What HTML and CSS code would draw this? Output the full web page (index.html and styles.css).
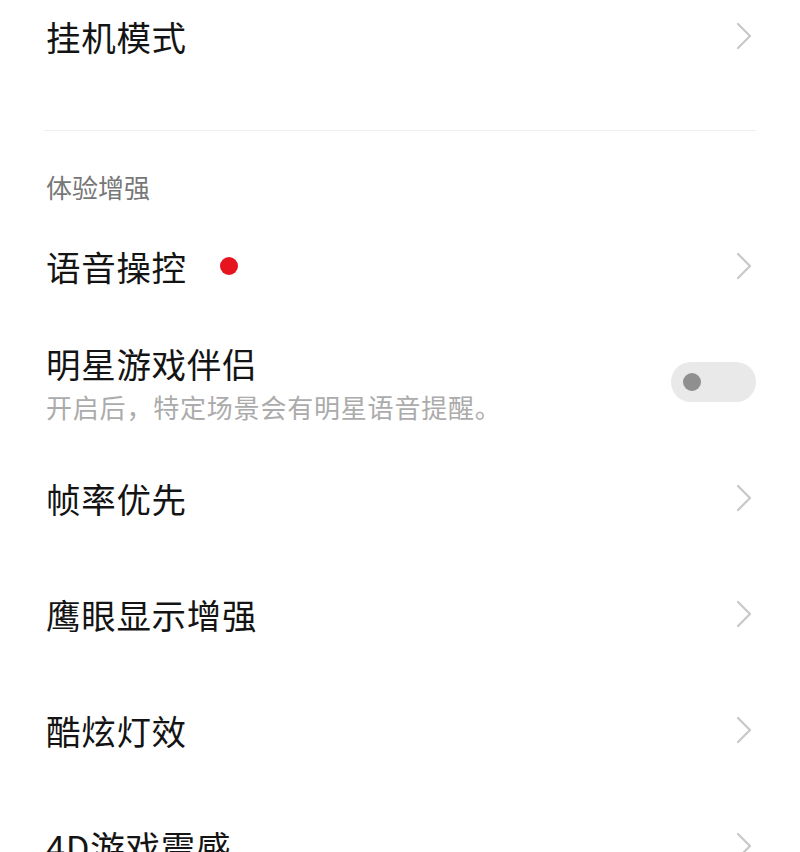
FILE: index.html
```html
<!DOCTYPE html>
<html lang="zh-CN">
<head>
<meta charset="utf-8">
<title>设置</title>
<link rel="stylesheet" href="styles.css">
</head>
<body>
<div class="page">
  <div class="row first">
    <span class="title">挂机模式</span>
    <svg class="chev" viewBox="0 0 16 28"><path d="M2 2 L14 14 L2 26"/></svg>
  </div>
  <div class="divider"></div>
  <div class="section">体验增强</div>
  <div class="row">
    <div class="left"><span class="title">语音操控</span><span class="dot"></span></div>
    <svg class="chev" viewBox="0 0 16 28"><path d="M2 2 L14 14 L2 26"/></svg>
  </div>
  <div class="row">
    <div class="stack">
      <span class="title">明星游戏伴侣</span>
      <span class="sub">开启后，特定场景会有明星语音提醒。</span>
    </div>
    <div class="toggle"><span class="knob"></span></div>
  </div>
  <div class="row">
    <span class="title">帧率优先</span>
    <svg class="chev" viewBox="0 0 16 28"><path d="M2 2 L14 14 L2 26"/></svg>
  </div>
  <div class="row">
    <span class="title">鹰眼显示增强</span>
    <svg class="chev" viewBox="0 0 16 28"><path d="M2 2 L14 14 L2 26"/></svg>
  </div>
  <div class="row">
    <span class="title">酷炫灯效</span>
    <svg class="chev" viewBox="0 0 16 28"><path d="M2 2 L14 14 L2 26"/></svg>
  </div>
  <div class="row">
    <span class="title">4D游戏震感</span>
    <svg class="chev" viewBox="0 0 16 28"><path d="M2 2 L14 14 L2 26"/></svg>
  </div>
</div>
</body>
</html>
```
FILE: styles.css
```css
html, body {
  margin: 0;
  padding: 0;
  background: #ffffff;
}
body {
  font-family: "Noto Sans CJK SC", "Noto Sans", sans-serif;
  color: #141414;
  overflow: hidden;
  height: 852px;
}
.page {
  padding: 0 44px 0 46px;
}
.row {
  height: 116px;
  display: flex;
  align-items: center;
  justify-content: space-between;
}
.row.first {
  height: 74px;
  padding-bottom: 2px;
  box-sizing: border-box;
}
.title {
  font-size: 34.5px;
  line-height: 40px;
  letter-spacing: 0.7px;
}
.left {
  display: flex;
  align-items: center;
}
.dot {
  width: 18px;
  height: 18px;
  border-radius: 50%;
  background: #e5141f;
  margin-left: 33px;
}
.chev {
  width: 16px;
  height: 28px;
  margin-right: 4px;
  fill: none;
  stroke: #c8c8c8;
  stroke-width: 2.2;
  stroke-linecap: round;
  stroke-linejoin: round;
}
.divider {
  margin-top: 56px;
  margin-left: -2px;
  height: 1px;
  background: #eeeeee;
}
.section {
  padding: 43px 0 8px;
  font-size: 26px;
  line-height: 26px;
  color: #777777;
}
.stack {
  display: flex;
  flex-direction: column;
}
.sub {
  margin-top: 9px;
  font-size: 26px;
  line-height: 30px;
  letter-spacing: 0.8px;
  color: #ababab;
}
.toggle {
  width: 85px;
  height: 40px;
  border-radius: 20px;
  background: #e9e9e9;
  display: flex;
  align-items: center;
  padding-left: 12px;
  box-sizing: border-box;
}
.knob {
  width: 18px;
  height: 18px;
  border-radius: 50%;
  background: #8f8f8f;
}
```
